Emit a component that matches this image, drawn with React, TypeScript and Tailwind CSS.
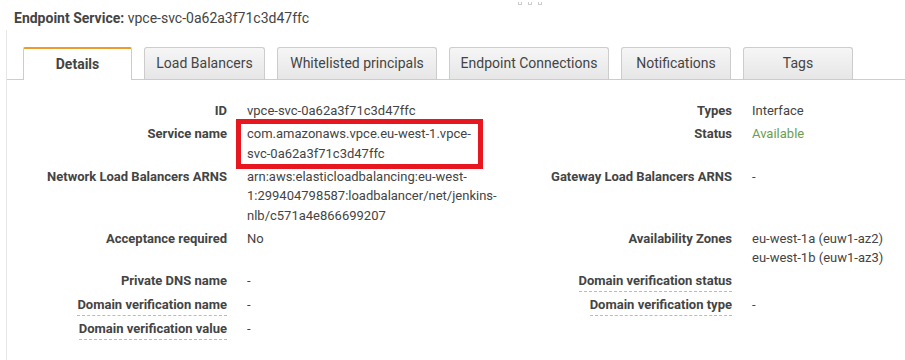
import React from 'react';

const tabs = [
    { name: 'Details', width: 'w-[109px]' },
    { name: 'Load Balancers', width: 'w-[121px]' },
    { name: 'Whitelisted principals', width: 'w-[160px]' },
    { name: 'Endpoint Connections', width: 'w-[160px]' },
    { name: 'Notifications', width: 'w-[110px]' },
    { name: 'Tags', width: 'w-[110px]' },
];

const Label: React.FC<{ children: React.ReactNode; dashed?: boolean }> = ({ children, dashed }) => (
    <div className="text-right font-bold text-[#444]">
        {dashed ? (
            <span className="inline-block border-b border-dashed border-[#bbb]">{children}</span>
        ) : children}
    </div>
);

const Value: React.FC<{ children?: React.ReactNode; className?: string }> = ({ children, className }) => (
    <div className={`text-[#444] ${className ?? ''}`}>{children}</div>
);

const App: React.FC = () => {
    const active = 'Details';

    return (
        <main className="w-[905px] h-[360px] bg-white overflow-hidden relative" style={{ fontFamily: 'Roboto, "Liberation Sans", sans-serif' }}>
            {/* drag handle */}
            <div className="absolute top-[2px] left-[518px] flex gap-[6px]">
                <span className="block w-[4px] h-[3px] border border-[#ccc] border-t-0"></span>
                <span className="block w-[4px] h-[3px] border border-[#ccc] border-t-0"></span>
                <span className="block w-[4px] h-[3px] border border-[#ccc] border-t-0"></span>
            </div>

            <div className="pl-[14px] pt-[8px] text-[14px] leading-[20px] text-[#444]">
                <span className="font-bold">Endpoint Service:</span> vpce-svc-0a62a3f71c3d47ffc
            </div>

            <div className="ml-[6px] mt-[2px] border-l border-[#e6e6e6] h-[330px]">
                <div className="pt-[17px] flex gap-[12px] pl-[16px] border-b border-[#ccc]">
                    {tabs.map((t) => (
                        t.name === active ? (
                            <div key={t.name} className={`${t.width} h-[33px] -mb-px bg-white border-x border-[#ccc] border-t-2 border-t-[#ec9c2a] rounded-t-[2px] flex items-center justify-center text-[14px] font-bold text-[#444]`}>
                                {t.name}
                            </div>
                        ) : (
                            <div key={t.name} className={`${t.width} h-[32px] bg-gradient-to-b from-[#f6f6f6] to-[#e6e6e6] border border-b-0 border-[#ccc] rounded-t-[3px] flex items-center justify-center text-[14px] text-[#444]`}>
                                {t.name}
                            </div>
                        )
                    ))}
                </div>

                <div className="pt-[21px] grid grid-cols-[220px_255px_210px_1fr] gap-x-[20px] gap-y-[3.5px] text-[13px] leading-[19.5px]">
                    <Label>ID</Label>
                    <Value>vpce-svc-0a62a3f71c3d47ffc</Value>
                    <Label>Types</Label>
                    <Value>Interface</Value>

                    <Label>Service name</Label>
                    <div className="relative">
                        <Value>com.amazonaws.vpce.eu-west-1.vpce-<br />svc-0a62a3f71c3d47ffc</Value>
                        <div className="absolute left-[-11px] top-[-5px] w-[247px] h-[50px] border-[5px] border-[#e8161f]"></div>
                    </div>
                    <Label>Status</Label>
                    <Value className="!text-[#6b9e4f]">Available</Value>

                    <Label>Network Load Balancers ARNS</Label>
                    <Value>arn:aws:elasticloadbalancing:eu-west-<br />1:299404798587:loadbalancer/net/jenkins-<br />nlb/c571a4e866699207</Value>
                    <Label>Gateway Load Balancers ARNS</Label>
                    <Value>-</Value>

                    <Label>Acceptance required</Label>
                    <Value>No</Value>
                    <Label>Availability Zones</Label>
                    <Value>eu-west-1a (euw1-az2)<br />eu-west-1b (euw1-az3)</Value>

                    <Label>Private DNS name</Label>
                    <Value>-</Value>
                    <Label dashed>Domain verification status</Label>
                    <Value></Value>

                    <Label dashed>Domain verification name</Label>
                    <Value>-</Value>
                    <Label dashed>Domain verification type</Label>
                    <Value>-</Value>

                    <Label dashed>Domain verification value</Label>
                    <Value>-</Value>
                </div>
            </div>
        </main>
    );
};

export default App;
